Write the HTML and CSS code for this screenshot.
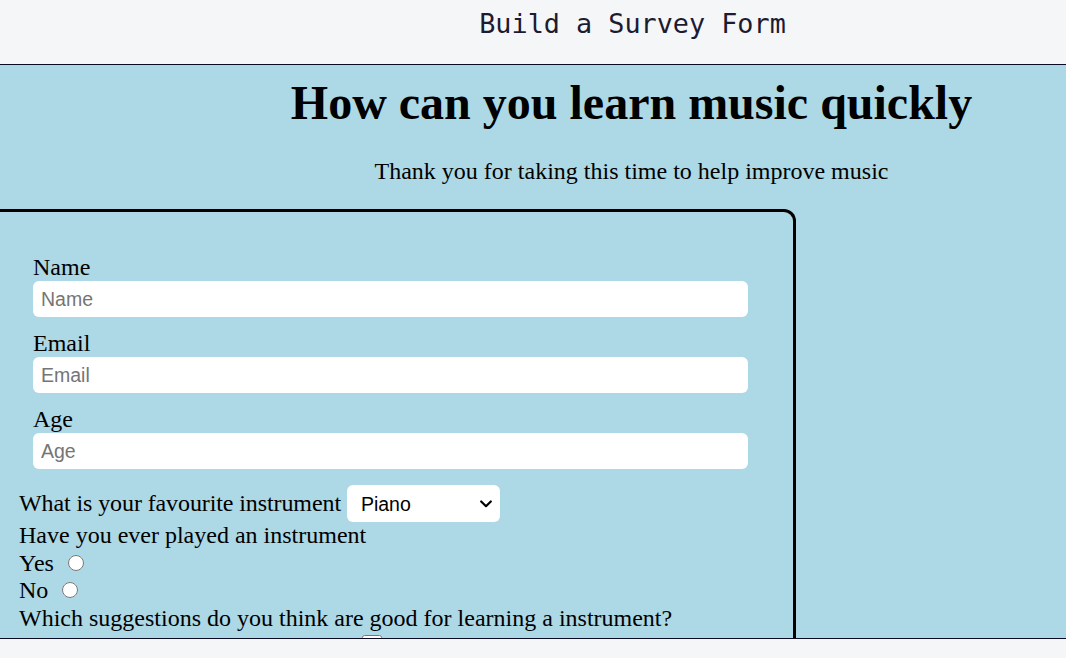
FILE: index.html
```html
<!DOCTYPE html>
<html lang="en">
<head>
<meta charset="utf-8">
<title>Build a Survey Form</title>
<link rel="stylesheet" href="styles.css">
</head>
<body>
<header class="topbar"><span class="topbar-title">Build a Survey Form</span></header>
<main class="preview">
  <div class="page">
    <h1 class="title">How can you learn music quickly</h1>
    <p class="description">Thank you for taking this time to help improve music</p>
    <form class="survey">
      <div class="field">
        <label class="field-label" for="name">Name</label>
        <input class="text-input" id="name" type="text" placeholder="Name">
      </div>
      <div class="field">
        <label class="field-label" for="email">Email</label>
        <input class="text-input" id="email" type="email" placeholder="Email">
      </div>
      <div class="field">
        <label class="field-label" for="age">Age</label>
        <input class="text-input" id="age" type="number" placeholder="Age">
      </div>
      <div class="line select-line">
        <label for="instrument">What is your favourite instrument</label>
        <span class="select-wrap">
          <select class="dropdown" id="instrument">
            <option>Piano</option>
            <option>Guitar</option>
            <option>Violin</option>
            <option>Drums</option>
          </select>
          <svg class="chevron" width="12" height="8" viewBox="0 0 12 8" aria-hidden="true"><path d="M1.2 1.5 L6 6.2 L10.8 1.5" fill="none" stroke="#000" stroke-width="2.2" stroke-linecap="round" stroke-linejoin="round"/></svg>
        </span>
      </div>
      <p class="line">Have you ever played an instrument</p>
      <label class="line">Yes <input class="radio" type="radio" name="played" value="yes"></label>
      <label class="line">No <input class="radio" type="radio" name="played" value="no"></label>
      <p class="line">Which suggestions do you think are good for learning a instrument?</p>
      <div class="line check-line"><input class="check" type="checkbox" value="practice"></div>
    </form>
  </div>
</main>
<footer class="bottombar"></footer>
</body>
</html>
```
FILE: styles.css
```css
* {
  box-sizing: border-box;
}

html,
body {
  margin: 0;
  padding: 0;
}

body {
  width: 1066px;
  height: 658px;
  overflow: hidden;
  display: flex;
  flex-direction: column;
  background: #f5f6f7;
}

.topbar {
  flex: 0 0 65px;
  display: flex;
  justify-content: center;
  align-items: flex-start;
  padding: 8px 0 0 199px;
  background: #f5f6f7;
  border-bottom: 1px solid #0a0a23;
  font-family: "DejaVu Sans Mono", monospace;
  font-size: 26.8px;
  line-height: 31px;
  color: #1b1b32;
}

.preview {
  flex: 0 0 574px;
  overflow: hidden;
  background: #add8e6;
  border-bottom: 1px solid #0a0a23;
}

.bottombar {
  flex: 1 1 auto;
  background: #f5f6f7;
}

.page {
  font-family: "Liberation Serif", "Times New Roman", serif;
  color: #000;
}

.title {
  margin: 10px 0 0;
  padding-left: 197px;
  font-size: 48px;
  line-height: 56px;
  font-weight: bold;
  text-align: center;
}

.description {
  margin: 26px 0 0;
  padding-left: 197px;
  font-size: 24px;
  line-height: 28px;
  text-align: center;
}

.survey {
  margin: 24px 0 0;
  width: 796px;
  height: 500px;
  padding: 41px 0 0 19px;
  border: 3px solid #000;
  border-left: none;
  border-radius: 0 12px 0 0;
  font-size: 24px;
  line-height: 27.6px;
}

.field {
  margin: 0 0 12px 14px;
}

.field-label {
  display: block;
  line-height: 28px;
}

.text-input {
  display: block;
  width: 715px;
  height: 36px;
  margin: 0;
  padding: 0 8px;
  border: none;
  border-radius: 6px;
  background: #fff;
  font-family: "Liberation Sans", Arial, sans-serif;
  font-size: 19.5px;
  color: #000;
  outline: none;
}

.text-input::placeholder {
  color: #757575;
}

.line {
  display: block;
  margin: 0;
}

.select-line {
  margin-top: 16px;
  letter-spacing: -0.1px;
}

.select-wrap {
  position: relative;
  display: inline-block;
  vertical-align: baseline;
  letter-spacing: 0;
}

.dropdown {
  -webkit-appearance: none;
  appearance: none;
  width: 153px;
  height: 37px;
  margin: 0;
  padding: 0 30px 0 14px;
  border: none;
  border-radius: 6px;
  background: #fff;
  font-family: "Liberation Sans", Arial, sans-serif;
  font-size: 19.5px;
  color: #000;
}

.chevron {
  position: absolute;
  right: 8px;
  top: 15px;
  pointer-events: none;
}

.radio {
  width: 16px;
  height: 16px;
  margin: 0 0 0 8px;
}

.check-line {
  padding-left: 343px;
  height: 27px;
}

.check {
  width: 20px;
  height: 20px;
  margin: 3px 0 0;
  vertical-align: top;
}
```
